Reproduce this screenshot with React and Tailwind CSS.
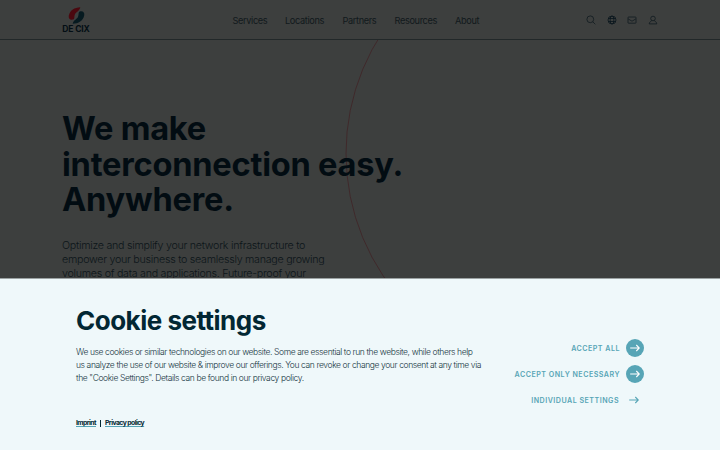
const NAV = [
  { label: "Services", width: "w-[52.5px]" },
  { label: "Locations", width: "w-[57.5px]" },
  { label: "Partners", width: "w-[52px]" },
  { label: "Resources", width: "w-[60.5px]" },
  { label: "About", width: "w-[30px]" },
];

const ACTIONS = [
  { label: "Accept all", filled: true },
  { label: "Accept only necessary", filled: true },
  { label: "Individual settings", filled: false },
];

// one half of the logo mark, the other half is the same shape turned around
const BLADE = "M12.3 0.2C6.500 0.5 2 3 0.8 8.500C0.2 11.5 1.800 13.2 5.2 12.6C7 12 5.8 9.500 7.200 6.800C8.200 4.800 11.600 4 12.3 0.2Z";

function Logo() {
  return (
    <div className="flex flex-col items-center w-[28px] h-[27px]">
      <svg className="w-[17px] h-[17px] mt-px shrink-0" viewBox="0 0 17 17">
        <path d={BLADE} fill="#4b080f" />
        <path d={BLADE} fill="#061a20" transform="rotate(180 8.5 8.5)" />
      </svg>
      <span className="mt-[1px] text-[8.5px] leading-[9px] font-bold tracking-[-0.15px] whitespace-nowrap text-[#030e14]">DE CIX</span>
    </div>
  );
}

function HeaderIcons() {
  return (
    <div className="flex items-center gap-[10.7px] text-[#101b20]">
      <svg className="w-[10px] h-[10px]" viewBox="0 0 10 10" fill="none" stroke="currentColor" strokeWidth="0.8">
        <circle cx="4.300" cy="4.300" r="3.400" />
        <path d="M6.800 6.800L9.300 9.300" />
      </svg>
      <svg className="w-[10px] h-[10px]" viewBox="0 0 10 10" fill="none" stroke="#07141c" strokeWidth="0.8">
        <circle cx="5" cy="5" r="4" />
        <ellipse cx="5" cy="5" rx="1.900" ry="4" />
        <path d="M1.400 3.500H8.600M1.400 6.500H8.600" />
      </svg>
      <svg className="w-[10px] h-[10px]" viewBox="0 0 10 10" fill="none" stroke="currentColor" strokeWidth="0.8">
        <rect x="1" y="2" width="8" height="6.200" rx="0.600" />
        <path d="M1.300 4L5 6.200L8.700 4" />
      </svg>
      <svg className="w-[10px] h-[10px]" viewBox="0 0 10 10" fill="none" stroke="currentColor" strokeWidth="0.8">
        <circle cx="5" cy="3.500" r="2.300" />
        <path d="M3.600 5.500C3.600 6.800 1.300 6.200 1.200 8.900H8.800C8.700 6.200 6.400 6.800 6.400 5.500" />
      </svg>
    </div>
  );
}

function Action({ label, filled }) {
  return (
    <button className="flex items-center gap-[6px] h-[26px] text-[#57a5b6]">
      <span className={`pt-px text-[7.1px] font-semibold uppercase tracking-[0.5px] whitespace-nowrap ${filled ? "" : "mr-[2px]"}`}>{label}</span>
      <span className={`flex items-center justify-center w-[18px] h-[18px] rounded-full ${filled ? "bg-[#57a5b6] text-white" : "-ml-px pr-[2px]"}`}>
        <svg className="w-[10px] h-[8px]" viewBox="0 0 10 8" fill="none" stroke="currentColor" strokeWidth="1.1">
          <path d="M0.200 4H9.300M6.300 1L9.300 4L6.300 7" />
        </svg>
      </span>
    </button>
  );
}

export default function App() {
  return (
    <div className="relative flex flex-col w-[720px] h-[450px] overflow-hidden bg-[#3d3f3e] font-[Inter,sans-serif]">
      <svg className="absolute left-0 top-[40px] w-[720px] h-[238px]" viewBox="0 40 720 238" fill="none">
        <circle cx="566" cy="153.500" r="220" stroke="#402326" strokeWidth="0.800" />
      </svg>

      <header className="relative flex items-center h-[40px] shrink-0 border-b border-[#222829] pl-[62px] pr-[62px]">
        <Logo />
        <nav className="flex ml-[142.500px] pt-[2px] text-[9.2px] leading-[12px] tracking-[-0.360px] text-[#11191c]">
          {NAV.map((item) => (
            <a key={item.label} className={`${item.width} whitespace-nowrap`}>{item.label}</a>
          ))}
        </nav>
        <div className="ml-auto pt-px">
          <HeaderIcons />
        </div>
      </header>

      <main className="relative h-[238px] shrink-0 overflow-hidden pl-[62px] pt-[71px]">
        <h1 className="text-[32.600px] leading-[35.500px] font-bold tracking-[-0.220px] text-[#020c12]">
          <span className="block">We make</span>
          <span className="block">interconnection easy.</span>
          <span className="block">Anywhere.</span>
        </h1>
        <p className="mt-[21px] text-[10.700px] leading-[14px] font-light tracking-[-0.270px] text-[#0c1519]">
          Optimize and simplify your network infrastructure to<br />
          empower your business to seamlessly manage growing<br />
          volumes of data and applications. Future-proof your
        </p>
      </main>

      <section className="relative flex flex-1 justify-between border-t border-[#9ca2a3] bg-[#eff8fa] pl-[76px] pr-[76px]">
        <div className="w-[420px] pt-[25px]">
          <h2 className="text-[26px] leading-[34px] font-bold tracking-[-0.500px] text-[#022733]">Cookie settings</h2>
          <p className="mt-[8px] text-[8.500px] leading-[13px] font-light tracking-[-0.390px] whitespace-nowrap text-[#12323c]">
            We use cookies or similar technologies on our website. Some are essential to run the website, while others help<br />
            us analyze the use of our website &amp; improve our offerings. You can revoke or change your consent at any time via<br />
            the "Cookie Settings". Details can be found in our privacy policy.
          </p>
          <div className="flex items-center mt-[33px] text-[6.800px] leading-[10px] font-bold tracking-[-0.540px] text-[#022733]">
            <a className="underline decoration-[#57a5b6] underline-offset-1">Imprint</a>
            <span className="w-px h-[7px] mx-[4px] bg-[#022733]" />
            <a className="underline decoration-[#57a5b6] underline-offset-1">Privacy policy</a>
          </div>
        </div>
        <div className="flex flex-col items-end pt-[56.400px]">
          {ACTIONS.map((action) => (
            <Action key={action.label} {...action} />
          ))}
        </div>
      </section>
    </div>
  );
}
